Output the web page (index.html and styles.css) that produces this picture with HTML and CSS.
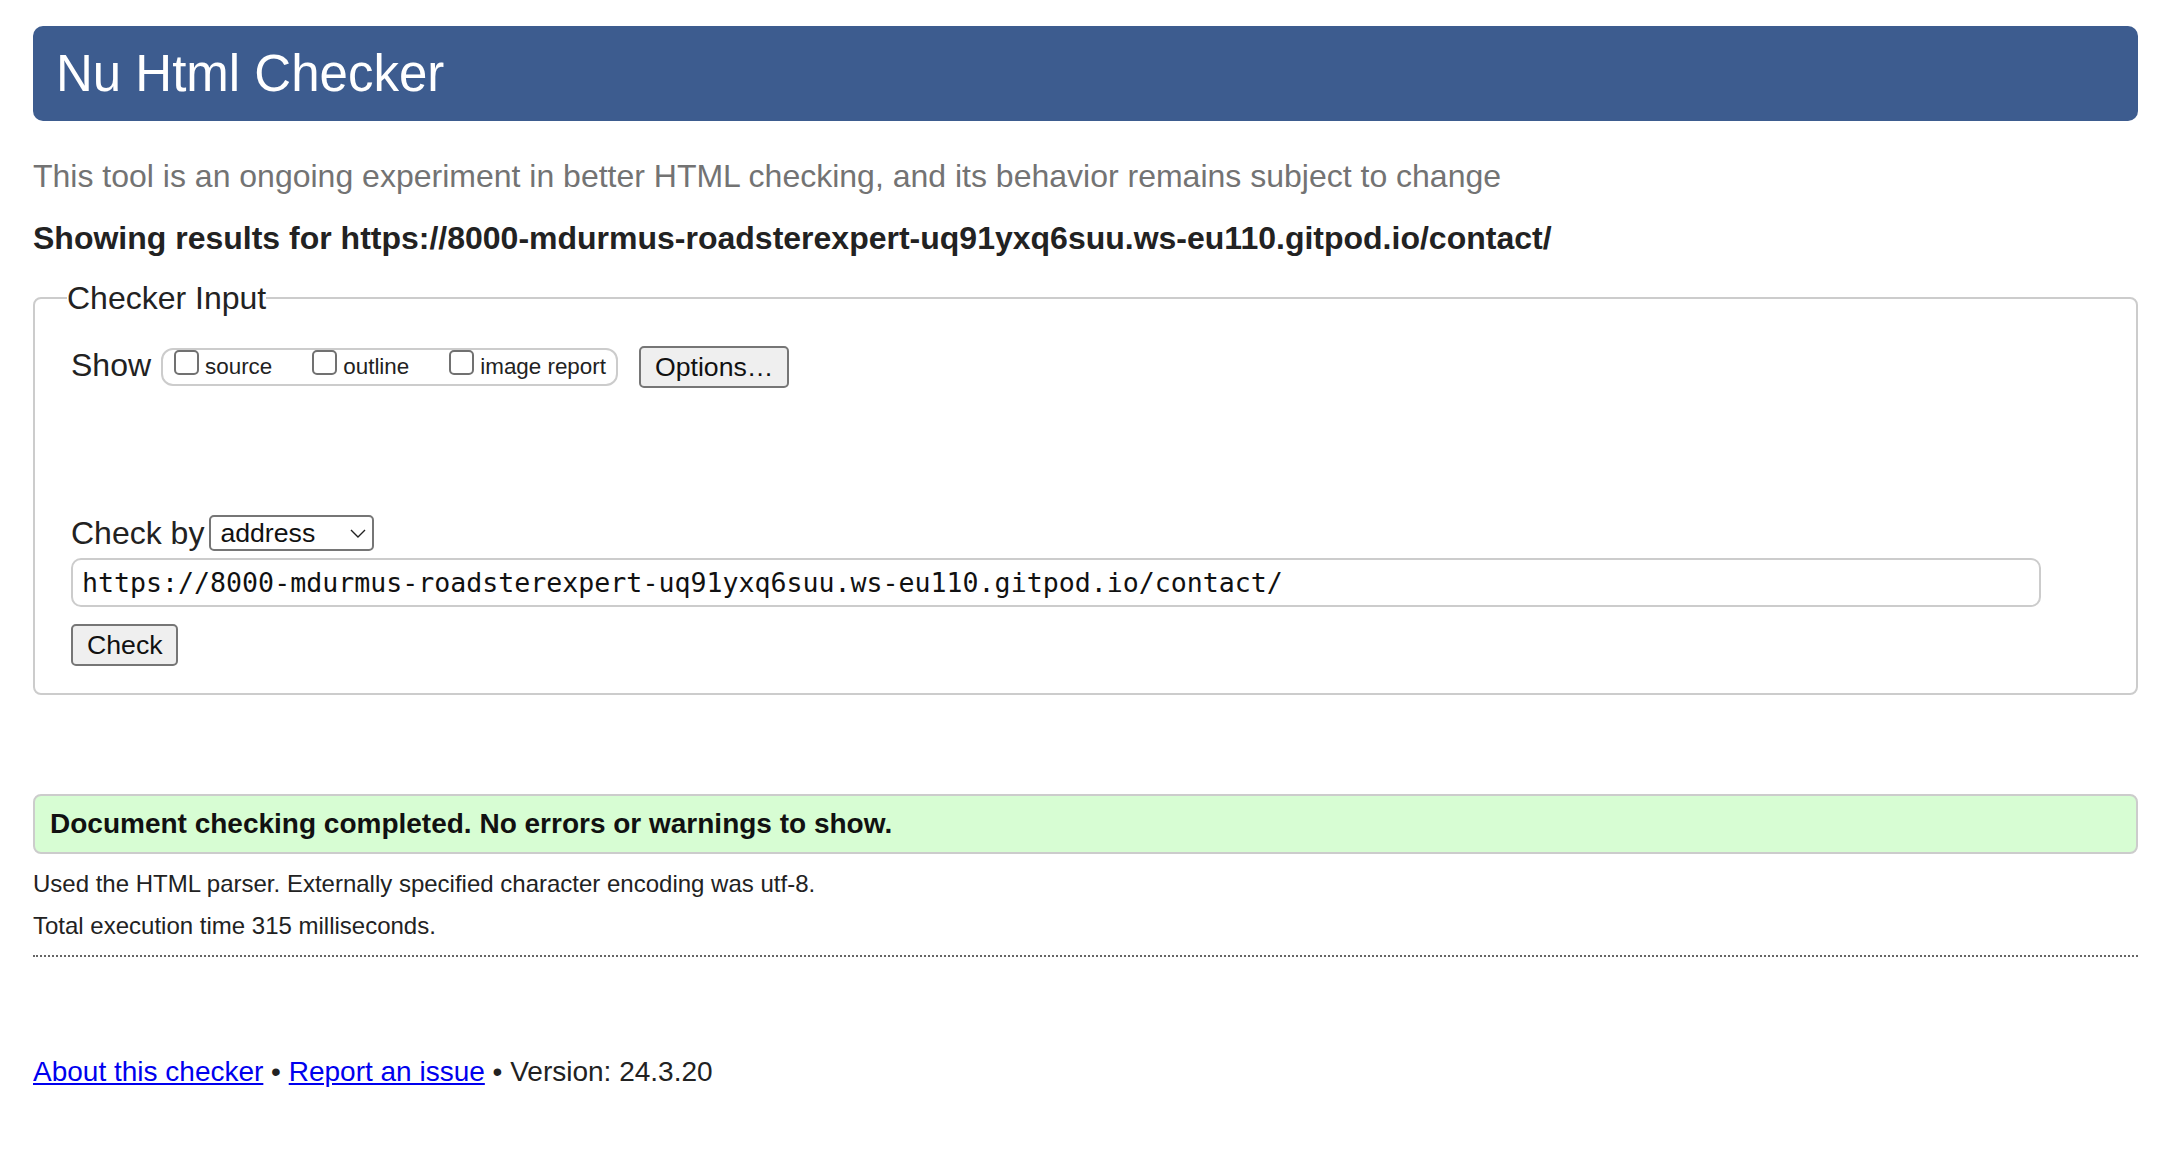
FILE: index.html
```html
<!DOCTYPE html>
<html lang="en">
<head>
<meta charset="utf-8">
<title>Nu Html Checker</title>
<link rel="stylesheet" href="styles.css">
</head>
<body>
<header class="banner"><h1 class="title">Nu Html Checker</h1></header>
<p class="subtitle">This tool is an ongoing experiment in better HTML checking, and its behavior remains subject to change</p>
<p class="showing">Showing results for https://8000-mdurmus-roadsterexpert-uq91yxq6suu.ws-eu110.gitpod.io/contact/</p>
<form class="checker-form">
  <fieldset class="input-set">
    <legend class="legend">Checker Input</legend>
    <div class="show-row">
      <span class="show-label">Show</span>
      <span class="pill">
        <label class="opt"><input class="cb" type="checkbox"><span>source</span></label>
        <label class="opt"><input class="cb" type="checkbox"><span>outline</span></label>
        <label class="opt"><input class="cb" type="checkbox"><span>image report</span></label>
      </span>
      <button class="btn btn-options" type="button">Options…</button>
    </div>
    <div class="checkby-row">
      <span class="checkby-label">Check by</span>
      <span class="select-wrap">
        <select class="select"><option>address</option></select>
        <svg class="chevron" width="16" height="9" viewBox="0 0 16 9"><path d="M1 1 L8 8 L15 1" fill="none" stroke="#222" stroke-width="1.4"/></svg>
      </span>
    </div>
    <input class="url" type="text" value="https://8000-mdurmus-roadsterexpert-uq91yxq6suu.ws-eu110.gitpod.io/contact/">
    <div class="check-row"><button class="btn btn-check" type="button">Check</button></div>
  </fieldset>
</form>
<div class="success">Document checking completed. No errors or warnings to show.</div>
<p class="info info-first">Used the HTML parser. Externally specified character encoding was utf-8.</p>
<p class="info">Total execution time 315 milliseconds.</p>
<hr class="dots">
<p class="footer"><a class="link" href="#">About this checker</a> • <a class="link" href="#">Report an issue</a> • Version: 24.3.20</p>
</body>
</html>
```
FILE: styles.css
```css
html { background: #fff; }
body {
  margin: 26px 46px 0 33px;
  font-family: "Liberation Sans", Arial, Helvetica, sans-serif;
  color: #222;
}
.banner {
  height: 95px;
  background: #3d5c8f;
  border-radius: 10px;
  display: flex;
  align-items: center;
  padding: 0 23px;
}
.title {
  margin: 0;
  font-size: 51px;
  line-height: 58px;
  font-weight: normal;
  color: #fff;
}
.subtitle {
  margin: 37px 0 0;
  font-size: 32px;
  line-height: 36px;
  color: #737373;
}
.showing {
  margin: 26px 0 0;
  font-size: 32px;
  line-height: 36px;
  font-weight: bold;
  color: #222;
}
.checker-form { margin: 0; }
.input-set {
  margin: 24px 0 0;
  padding: 30px 36px 27px 36px;
  border: 2px solid #ccc;
  border-radius: 8px;
  min-width: 0;
}
.legend {
  padding: 0;
  margin-left: -4px;
  font-size: 32px;
  line-height: 36px;
  color: #222;
}
.show-row {
  display: flex;
  align-items: center;
  height: 42px;
}
.show-label {
  font-size: 32px;
  line-height: 36px;
  margin-right: 10px;
  margin-bottom: 4px;
}
.pill {
  display: flex;
  align-items: center;
  gap: 40px;
  box-sizing: border-box;
  height: 38px;
  padding: 0 10px 0 11px;
  border: 2px solid #ccc;
  border-radius: 12px;
}
.opt {
  display: flex;
  align-items: flex-end;
  height: 26px;
  font-size: 22.4px;
  line-height: 26px;
  color: #222;
}
.cb {
  appearance: none;
  -webkit-appearance: none;
  box-sizing: border-box;
  width: 25px;
  height: 25px;
  margin: 0 6px 5px 0;
  border: 2px solid #717171;
  border-radius: 5px;
  background: #fff;
}
.btn {
  box-sizing: border-box;
  font-family: "Liberation Sans", Arial, Helvetica, sans-serif;
  font-size: 26.67px;
  color: #111;
  background: #efefef;
  border: 2px solid #767676;
  border-radius: 5px;
  line-height: 30px;
}
.btn-options {
  margin-left: 21px;
  height: 42px;
  padding: 0 14px;
}
.checkby-row {
  display: flex;
  align-items: center;
  margin-top: 127px;
  height: 36px;
}
.checkby-label {
  font-size: 32px;
  line-height: 36px;
  margin-right: 5px;
}
.select-wrap {
  position: relative;
  display: block;
}
.select {
  appearance: none;
  -webkit-appearance: none;
  box-sizing: border-box;
  display: block;
  width: 165px;
  height: 36px;
  padding: 0 0 0 9px;
  font-family: "Liberation Sans", Arial, Helvetica, sans-serif;
  font-size: 26.67px;
  color: #111;
  background: #fff;
  border: 2px solid #767676;
  border-radius: 5px;
}
.chevron {
  position: absolute;
  right: 8px;
  top: 14px;
}
.url {
  display: block;
  box-sizing: border-box;
  width: 1970px;
  height: 49px;
  margin-top: 7px;
  padding: 0 9px;
  font-family: "DejaVu Sans Mono", monospace;
  font-size: 26.6px;
  color: #111;
  background: #fff;
  border: 2px solid #ccc;
  border-radius: 10px;
  outline: none;
}
.check-row { margin-top: 17px; }
.btn-check {
  height: 42px;
  padding: 0 13px 0 14px;
}
.success {
  margin-top: 99px;
  padding: 12px 15px;
  font-size: 28px;
  line-height: 32px;
  font-weight: bold;
  color: #111;
  background: #d7fdd3;
  border: 2px solid #ccc;
  border-radius: 8px;
}
.info {
  margin: 14px 0 0;
  font-size: 24px;
  line-height: 28px;
  color: #222;
}
.info-first { margin-top: 16px; }
.dots {
  margin: 15px 0 0;
  height: 0;
  border: 0;
  border-top: 2px dotted #666;
}
.footer {
  margin: 99px 0 0;
  font-size: 28px;
  line-height: 32px;
  color: #222;
}
.link { color: #0000ee; text-decoration: underline; }
```
